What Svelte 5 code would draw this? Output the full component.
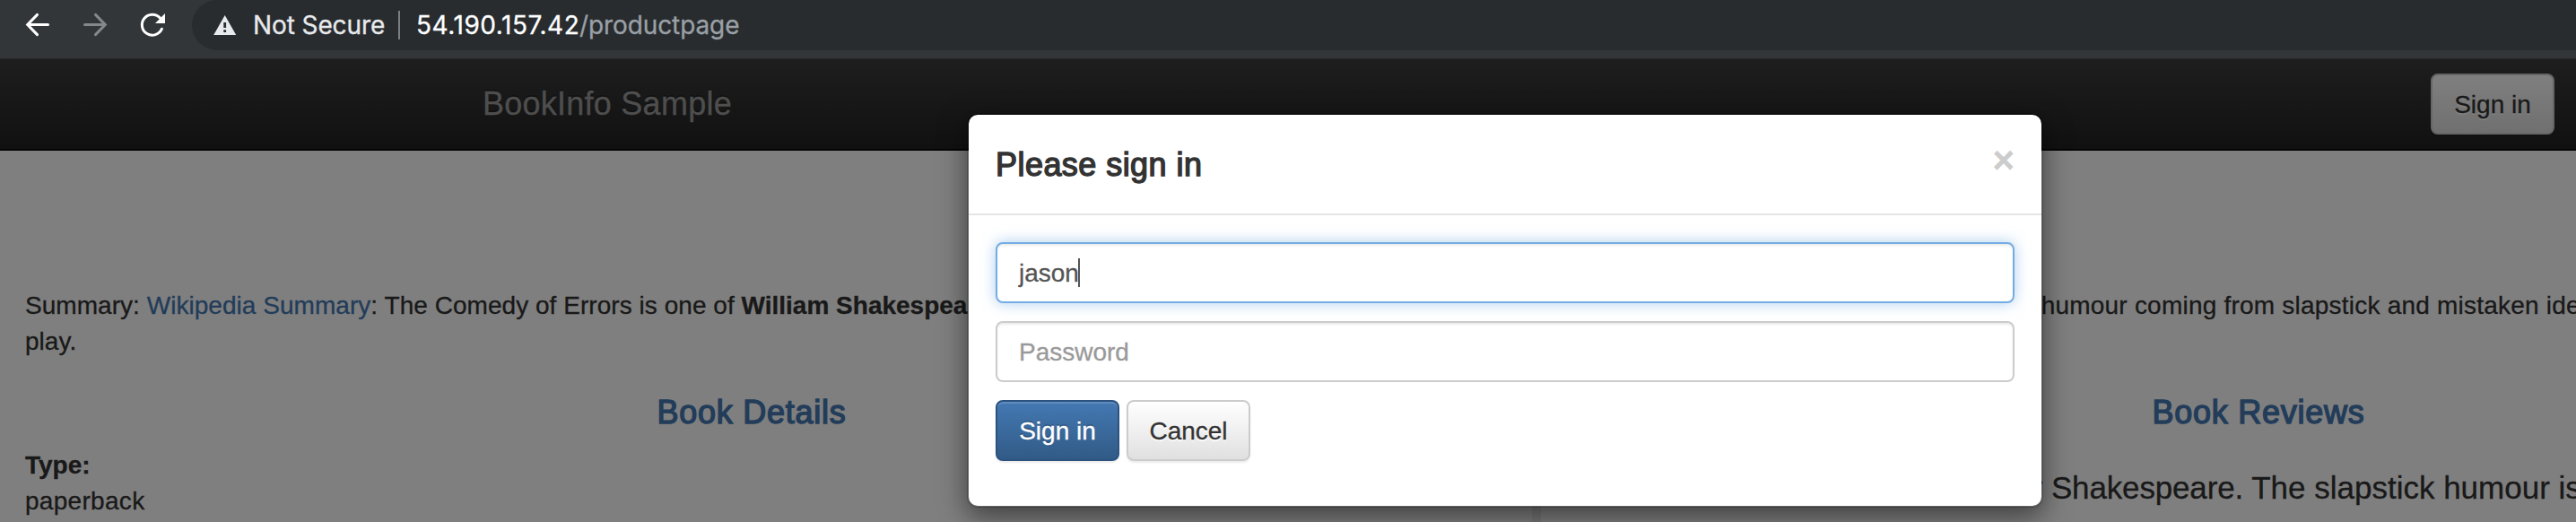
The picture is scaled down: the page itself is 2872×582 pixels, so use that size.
<script lang="ts">
  let username = $state('jason');
  let password = $state('');
</script>

<div class="screen">
  <header class="toolbar">
    <svg class="nav-icons" width="214" height="56" viewBox="0 0 214 56" fill="none">
      <g stroke="#fff" stroke-width="3" stroke-linecap="round" stroke-linejoin="miter">
        <path d="M53.5 27.5H31M41.5 16.4L30.7 27.5L41.5 38.6" />
      </g>
      <g stroke="#85888a" stroke-width="3" stroke-linecap="round">
        <path d="M94.5 27.5H117M106.5 16.4L117.3 27.5L106.5 38.6" />
      </g>
      <path d="M180.4 32.2A11.5 11.5 0 1 1 178.2 19.8" stroke="#fff" stroke-width="3" stroke-linecap="round" />
      <path d="M184 15V26H173Z" fill="#fff" />
    </svg>
    <div class="omnibox">
      <svg width="26" height="22" viewBox="0 0 26 22">
        <path d="M12.7 0L25.2 22H0.2Z" fill="#e8eaed" />
        <path d="M11.3 8h2.8v6h-2.8zM11.3 16.2h2.8v2.8h-2.8z" fill="#282c2f" />
      </svg>
      <span class="secure">Not Secure</span>
      <span class="sep"></span>
      <span class="host">54.190.157.42</span><span class="path">/productpage</span>
    </div>
  </header>

  <main class="page">
    <nav class="navbar">
      <div class="container">
        <span class="brand">BookInfo Sample</span>
        <button class="btn default">Sign in</button>
      </div>
    </nav>
    <p class="summary">
      Summary: <a href="#summary">Wikipedia Summary</a>: The Comedy of Errors is one of <b>William Shakespeare's</b> <span class="mid">early plays. It is his shortest and one of his most farcical comedies, with a major part of the</span> <span class="wide">humour coming from slapstick and mistaken identity, in addition to puns and word</span> play.
    </p>
    <div class="row">
      <section>
        <h4>Book Details</h4>
        <dl>
          <dt>Type:</dt>
          <dd>paperback</dd>
        </dl>
      </section>
      <section>
        <h4>Book Reviews</h4>
        <blockquote><span class="lead">An extremely entertaining play by</span> <span class="tight">Shakespeare.</span> The slapstick humour is refreshing!</blockquote>
      </section>
    </div>
  </main>

  <div class="backdrop">
    <div class="modal">
      <div class="modal-header">
        <h4>Please sign in</h4>
        <button class="close">×</button>
      </div>
      <form class="modal-body">
        <div class="control focused"><span>{username}</span><i class="caret"></i></div>
        <input class="control" type="password" placeholder="Password" bind:value={password} />
        <div class="actions">
          <button type="button" class="btn primary">Sign in</button>
          <button type="button" class="btn default">Cancel</button>
        </div>
      </form>
    </div>
  </div>
</div>

<style>
  :global(body) { margin: 0; }
  .screen, .screen * { box-sizing: border-box; }
  .screen {
    position: relative;
    width: 2872px;
    height: 582px;
    overflow: hidden;
    font: 28px/40px "Liberation Sans", Arial, sans-serif;
    color: #333;
    background: #fff;
    -webkit-text-stroke: 0.3px currentColor;
  }
  .toolbar {
    display: flex;
    align-items: flex-start;
    height: 66px;
    background: #323639;
    border-bottom: 1px solid #26292b;
  }
  .nav-icons { flex: none; }
  .omnibox {
    flex: 1;
    height: 56px;
    display: flex;
    align-items: center;
    padding-left: 24px;
    background: #282c2f;
    border-radius: 28px 0 0 28px;
    font-family: Inter, sans-serif;
    font-size: 28px;
    letter-spacing: -0.1px;
    white-space: nowrap;
  }
  .omnibox svg { flex: none; }
  .secure { width: 162px; margin-left: 18px; color: #e8eaed; }
  .sep { width: 2px; height: 32px; margin-right: 18px; background: #7c7f82; }
  .host { width: 182px; color: #fff; letter-spacing: 0.55px; }
  .path { color: #9aa0a6; }

  .page { width: 3360px; margin-left: -2px; height: 516px; overflow: hidden; }
  .navbar {
    height: 102px;
    background: linear-gradient(#3c3c3c, #222);
    border-bottom: 2px solid #080808;
  }
  .container {
    width: 2340px;
    height: 100px;
    margin: 0 auto;
    padding-left: 30px;
    display: flex;
    align-items: center;
    justify-content: space-between;
  }
  .brand { font-size: 36px; color: #9d9d9d; text-shadow: 0 -2px 0 rgba(0, 0, 0, 0.25); letter-spacing: 0.25px; }
  .summary { margin: 0; padding: 153px 30px 0; letter-spacing: 0.04px; }
  .summary b { letter-spacing: 0; }
  .mid { letter-spacing: 0.13px; }
  .wide { letter-spacing: 0.22px; }
  a { color: #4479b3; text-decoration: none; }
  .row { display: grid; grid-template-columns: 1fr 1fr; padding-top: 39px; }
  section { padding: 0 30px; }
  h4 {
    margin: 0;
    font-size: 36px;
    font-weight: 400;
    line-height: 40px;
    letter-spacing: 0.75px;
    -webkit-text-stroke: 1.4px currentColor;
  }
  section h4 { text-align: center; color: #4479b3; margin-bottom: 19px; }
  dl, dd { margin: 0; }
  dt { font-weight: 700; }
  dd { letter-spacing: 0.3px; }
  blockquote {
    margin: 0;
    padding: 20px 40px;
    border-left: 10px solid #eee;
    font-size: 35px;
    line-height: 50px;
  }
  .lead { letter-spacing: 0.05px; }
  .tight { letter-spacing: -0.15px; }

  .btn {
    width: 138px;
    height: 68px;
    padding: 2px 0 0;
    border: 2px solid #ccc;
    border-radius: 8px;
    font: 28px/40px "Liberation Sans", Arial, sans-serif;
    text-align: center;
    -webkit-text-stroke: 0.3px currentColor;
  }
  .default {
    color: #333;
    background: linear-gradient(#fff, #e0e0e0);
    text-shadow: 0 2px 0 #fff;
    box-shadow: inset 0 2px 0 rgba(255, 255, 255, 0.15), 0 2px 2px rgba(0, 0, 0, 0.075);
  }
  .primary {
    color: #fff;
    border-color: #2c5380;
    background: linear-gradient(#4479b3, #315a86);
    text-shadow: 0 -2px 0 rgba(0, 0, 0, 0.2);
    box-shadow: inset 0 2px 0 rgba(255, 255, 255, 0.15), 0 2px 2px rgba(0, 0, 0, 0.075);
  }

  .backdrop {
    position: absolute;
    inset: 66px 0 0 0;
    padding: 60px 0 0 1078px;
    background: rgba(0, 0, 0, 0.5);
    overflow: hidden;
  }
  .modal {
    width: 1200px;
    height: 440px;
    background: #fff;
    background-clip: padding-box;
    border: 2px solid rgba(0, 0, 0, 0.2);
    border-radius: 12px;
    box-shadow: 0 10px 30px rgba(0, 0, 0, 0.5);
  }
  .modal-header {
    display: flex;
    justify-content: space-between;
    align-items: flex-start;
    height: 112px;
    padding: 30px;
    border-bottom: 2px solid #e5e5e5;
  }
  .modal-header h4 { line-height: 52px; letter-spacing: 0.45px; }
  .close {
    padding: 0;
    border: 0;
    background: none;
    font: 700 42px/42px "Liberation Sans", Arial, sans-serif;
    color: #ccc;
  }
  .modal-body { display: flex; flex-direction: column; gap: 20px; padding: 30px; }
  .control {
    display: flex;
    align-items: center;
    width: 100%;
    height: 68px;
    padding: 14px 24px 12px;
    border: 2px solid #ccc;
    border-radius: 8px;
    background: #fff;
    color: #555;
    font: 28px/40px "Liberation Sans", Arial, sans-serif;
    box-shadow: inset 0 2px 2px rgba(0, 0, 0, 0.075);
    -webkit-text-stroke: 0.3px currentColor;
  }
  .control::placeholder { color: #999; opacity: 1; }
  .focused {
    border-color: #74ade4;
    box-shadow: inset 0 2px 2px rgba(0, 0, 0, 0.075), 0 0 16px rgba(116, 173, 228, 0.6);
  }
  .caret { width: 2px; height: 32px; margin: -2px 0 0 -1px; background: #555; }
  .actions { display: flex; gap: 8px; }
</style>
